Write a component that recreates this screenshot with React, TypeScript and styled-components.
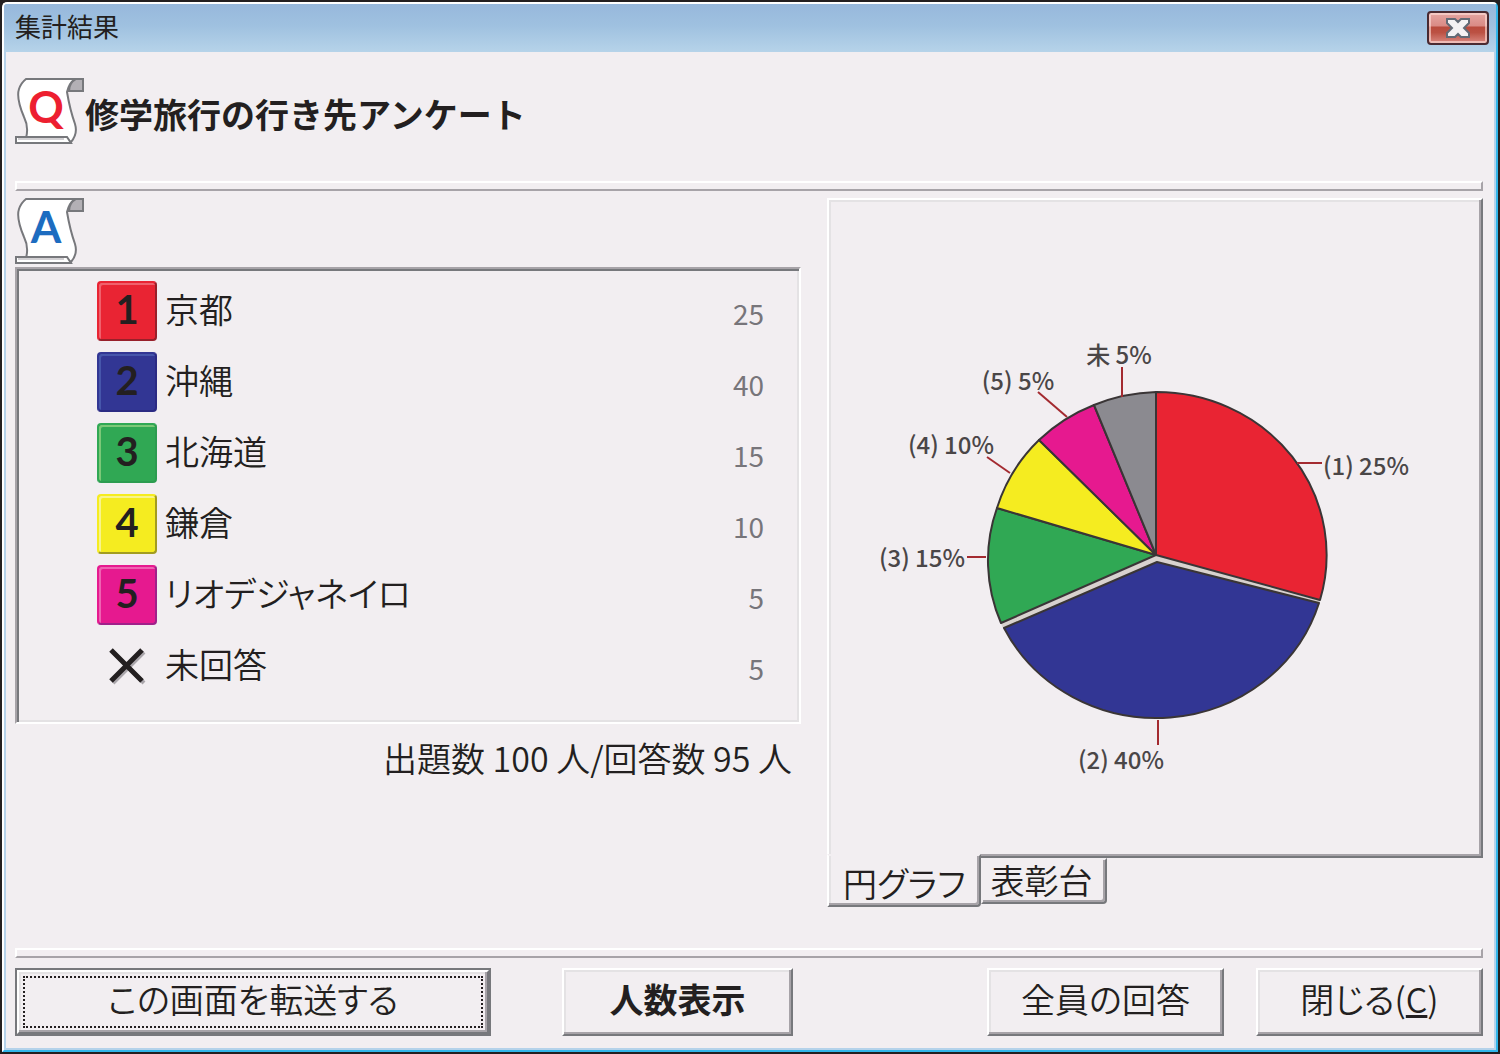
import React from 'react';
import styled, { createGlobalStyle, css } from 'styled-components';

const face = '#f2eef1';
const ink = '#231f20';
const dark = '#77787c';
const mid = '#a7a3a8';
const light = '#e4e2e4';

const GlobalStyle = createGlobalStyle`
  *, *::before, *::after { box-sizing: border-box; }
  body {
    margin: 0;
    background: ${ink};
    color: ${ink};
    font-family: "Noto Sans CJK JP", sans-serif;
    font-size: 34px;
    line-height: 44px;
    font-weight: 350;
  }
`;

const raised = css`
  border: 2px solid;
  border-color: #fff ${dark} ${dark} #fff;
  box-shadow: inset -2px -2px 0 ${mid}, inset 2px 2px 0 ${light};
`;

const Frame = styled.div`
  min-height: 100vh;
  display: flex;
  border: 2px solid ${ink};
`;

const Dialog = styled.main`
  flex: 1;
  min-width: 0;
  display: flex;
  flex-direction: column;
  border: 2px solid;
  border-color: #fff #31b5e9 #31b5e9 #fff;
  border-radius: 5px 5px 0 0;
  background: #b5d2ea;
  overflow: hidden;
`;

const TitleBar = styled.header`
  height: 48px;
  flex: none;
  display: flex;
  align-items: center;
  justify-content: space-between;
  padding: 0 7px 0 11px;
  background: linear-gradient(#97b8dc, #9fc1e0 45%, #b6d3e9);
`;

const WindowTitle = styled.span`
  padding-bottom: 4px;
  font-size: 26px;
  line-height: 32px;
  font-weight: 400;
`;

const CloseButton = styled.button`
  width: 62px;
  height: 34px;
  display: flex;
  align-items: center;
  justify-content: center;
  padding: 0;
  border: 2px solid #4a2a31;
  border-radius: 4px;
  background: linear-gradient(#e5a6a2, #d98a84 44%, #b94a3c 46%, #bb5143 65%, #d98880);
  box-shadow: inset 0 0 0 2px rgba(255, 225, 220, 0.6);
`;

const Body = styled.div`
  flex: 1;
  display: flex;
  flex-direction: column;
  margin: 0 2px 2px;
  padding: 0 11px 12px 9px;
  background: ${face};
`;

const Question = styled.section`
  display: flex;
  align-items: center;
  padding: 26px 0 36px;
`;

const QuestionTitle = styled.h1`
  margin: 0;
  padding-top: 4px;
  font-size: 34px;
  line-height: 44px;
  font-weight: 700;
`;

const Divider = styled.hr`
  width: 100%;
  height: 10px;
  flex: none;
  margin: 0;
  border: 2px solid;
  border-color: #fff ${mid} ${mid} #fff;
`;

const Columns = styled.div`
  display: grid;
  grid-template-columns: minmax(0, 786fr) minmax(0, 656fr);
  column-gap: 26px;
  padding-top: 7px;
`;

const AnswerColumn = styled.section`
  display: flex;
  flex-direction: column;
`;

const ListPanel = styled.div`
  margin-top: 2px;
  padding: 6px 35px 21px 80px;
  border: 2px solid;
  border-color: ${mid} #fff #fff ${mid};
  box-shadow: inset 2px 2px 0 ${dark}, inset -2px -2px 0 ${light};
`;

const AnswerTable = styled.table`
  width: 100%;
  border-collapse: collapse;
`;

const Cell = styled.td`
  height: 71px;
  padding: 0;
  vertical-align: middle;
`;

const BadgeCell = styled(Cell)`
  width: 68px;
`;

const NameCell = styled(Cell).attrs({ as: 'th', scope: 'row' })`
  padding-bottom: 4px;
  text-align: left;
  font-weight: 350;
  font-feature-settings: "palt";
`;

const CountCell = styled(Cell)`
  padding-top: 4px;
  text-align: right;
  font-size: 28px;
  font-weight: 400;
  color: #77757a;
`;

const Badge = styled.span<{ $fill: string; $shine: string; $shade: string }>`
  width: 60px;
  height: 60px;
  display: flex;
  align-items: center;
  justify-content: center;
  padding-bottom: 4px;
  border: 2px solid;
  border-color: ${p => p.$fill} ${p => p.$shade} ${p => p.$shade} ${p => p.$fill};
  border-radius: 4px;
  background: ${p => p.$fill};
  box-shadow: inset 2px 2px 0 ${p => p.$shine};
  font-family: Lato, sans-serif;
  font-size: 40px;
  line-height: 48px;
  font-weight: 700;
`;

const CrossBox = styled.span`
  width: 60px;
  display: flex;
  justify-content: center;
`;

const Totals = styled.p`
  margin: 0;
  padding: 12px 9px 0 0;
  text-align: right;
`;

const ChartColumn = styled.section`
  display: flex;
  flex-direction: column;
`;

const ChartPanel = styled.div`
  ${raised}
  padding: 2px;
`;

const Chart = styled.svg`
  display: block;
  width: 100%;
  height: auto;
  font-family: "Noto Sans CJK JP", sans-serif;
  font-size: 24px;
  font-weight: 500;
`;

const Tabs = styled.div`
  display: flex;
  align-items: flex-start;
`;

const Tab = styled.button<{ $active?: boolean }>`
  height: 46px;
  padding: 0 12px 4px 8px;
  border: 2px solid;
  border-color: transparent ${dark} ${dark} transparent;
  border-radius: 0 0 4px 0;
  box-shadow: inset -2px -2px 0 ${mid};
  background: ${face};
  color: inherit;
  font: inherit;
  line-height: 40px;
  font-feature-settings: "palt";
  ${p => p.$active && css`
    position: relative;
    height: 53px;
    margin-top: -4px;
    padding: 4px 13px 0 14px;
    border-left-color: #fff;
    box-shadow: inset -2px -2px 0 ${mid}, inset 2px 0 0 ${light};
  `}
`;

const Footer = styled.footer`
  margin-top: auto;
`;

const Actions = styled.div`
  display: grid;
  grid-template-columns: 476fr 71fr 231fr 194fr 237fr 32fr 227fr;
  padding-top: 10px;
`;

const PushButton = styled.button<{ $column: number; $bold?: boolean }>`
  grid-column: ${p => p.$column};
  height: 68px;
  padding: 0 0 6px;
  ${raised}
  background: ${face};
  color: inherit;
  font: inherit;
  font-weight: ${p => (p.$bold ? 700 : 350)};
  font-feature-settings: "palt";
  white-space: nowrap;
`;

const DefaultRing = styled.div`
  grid-column: 1;
  display: grid;
  border: 2px solid ${dark};
`;

const DefaultButton = styled(PushButton)`
  height: 64px;
  padding: 4px;
`;

const FocusFrame = styled.span`
  display: flex;
  align-items: center;
  justify-content: center;
  height: 52px;
  padding-bottom: 6px;
  border: 2px dotted ${ink};
`;

function Scroll({ letter, color }: { letter: string; color: string }) {
  return (
    <svg width="70" height="67" viewBox="0 0 70 67" aria-hidden="true">
      <path
        d="M11 1H60Q54 5 52 14Q55 32 60 46Q63 56 56 64L50 60H11Q14 49 9 39Q1 20 4 11Q6 5 11 1Z"
        fill="#fff"
        stroke={dark}
        strokeWidth="2"
      />
      <path d="M68 1V13H54Q54 5 61 1Z" fill="#b3b0b5" stroke={dark} strokeWidth="2" />
      <path d="M1 59H52L56 65H1Z" fill="#fff" stroke={dark} strokeWidth="2" />
      <path d="M3 61H49" stroke="#d3d1d4" strokeWidth="2" />
      <text x="31" y="45" textAnchor="middle" fontFamily="Lato" fontWeight="700" fontSize="44" fill={color}>
        {letter}
      </text>
    </svg>
  );
}

const answers = [
  { name: '京都', count: 25, fill: '#e92433', shine: '#f0606c', shade: '#98202a' },
  { name: '沖縄', count: 40, fill: '#323694', shine: '#4656ab', shade: '#2b2a83' },
  { name: '北海道', count: 15, fill: '#30a854', shine: '#7cc878', shade: '#2c9c50' },
  { name: '鎌倉', count: 10, fill: '#f5ec20', shine: '#f8f48c', shade: '#a29c20' },
  { name: 'リオデジャネイロ', count: 5, fill: '#e6198f', shine: '#ef62b2', shade: '#a0208a' },
];

const slices = [
  { fill: '#e92433', d: 'M325 353V190A170 163 0 0 1 489 398Z' },
  { fill: '#30a854', d: 'M325 353L170 421A170 163 0 0 1 166 306Z' },
  { fill: '#f5ec20', d: 'M325 353L166 306A170 163 0 0 1 208 238Z' },
  { fill: '#e6198f', d: 'M325 353L208 238A170 163 0 0 1 263 203Z' },
  { fill: '#8b8a90', d: 'M325 353L263 203A170 163 0 0 1 325 190Z' },
  { fill: '#323694', d: 'M326 360L488 401A170 162 0 0 1 173 426Z' },
];

const labels = [
  { text: '(1) 25%', x: 535, y: 273, line: 'M466 261H491' },
  { text: '(2) 40%', x: 290, y: 567, line: 'M327 518V543' },
  { text: '(3) 15%', x: 91, y: 365, line: 'M136 355H155' },
  { text: '(4) 10%', x: 120, y: 252, line: 'M156 255L179 271' },
  { text: '(5) 5%', x: 187, y: 188, line: 'M207 190L236 215' },
  { text: '未 5%', x: 288, y: 162, line: 'M291 165V195' },
];

export default function App() {
  return (
    <>
      <GlobalStyle />
      <Frame>
        <Dialog>
          <TitleBar>
            <WindowTitle>集計結果</WindowTitle>
            <CloseButton type="button" aria-label="閉じる">
              <svg width="26" height="22" viewBox="0 0 26 22">
                <path
                  d="M2 2H10L13 5L16 2H24V6L19 11L24 16V20H16L13 17L10 20H2V16L7 11L2 6Z"
                  fill="#f4f2f3"
                  stroke="#626a75"
                  strokeWidth="2"
                />
              </svg>
            </CloseButton>
          </TitleBar>
          <Body>
            <Question>
              <Scroll letter="Q" color="#ed1f30" />
              <QuestionTitle>修学旅行の行き先アンケート</QuestionTitle>
            </Question>
            <Divider />
            <Columns>
              <AnswerColumn>
                <Scroll letter="A" color="#1d6cc0" />
                <ListPanel>
                  <AnswerTable>
                    <tbody>
                      {answers.map((a, i) => (
                        <tr key={a.name}>
                          <BadgeCell>
                            <Badge $fill={a.fill} $shine={a.shine} $shade={a.shade}>{i + 1}</Badge>
                          </BadgeCell>
                          <NameCell>{a.name}</NameCell>
                          <CountCell>{a.count}</CountCell>
                        </tr>
                      ))}
                      <tr>
                        <BadgeCell>
                          <CrossBox>
                            <svg width="38" height="38" viewBox="0 0 38 38" aria-hidden="true">
                              <path d="M5 5L36 36M36 5L5 36" stroke="#aaa6ab" strokeWidth="4" />
                              <path d="M3 3L34 34M34 3L3 34" stroke={ink} strokeWidth="5" />
                            </svg>
                          </CrossBox>
                        </BadgeCell>
                        <NameCell>未回答</NameCell>
                        <CountCell>5</CountCell>
                      </tr>
                    </tbody>
                  </AnswerTable>
                </ListPanel>
                <Totals>出題数 100 人/回答数 95 人</Totals>
              </AnswerColumn>
              <ChartColumn>
                <ChartPanel role="tabpanel">
                  <Chart viewBox="0 0 648 652" role="img" aria-label="円グラフ">
                    <path d="M489 400L326 357L171 424" fill="none" stroke="#d8d2cf" strokeWidth="6" />
                    {slices.map(s => (
                      <path key={s.fill} d={s.d} fill={s.fill} stroke="#3a3536" strokeWidth="2" strokeLinejoin="round" />
                    ))}
                    {labels.map(l => (
                      <g key={l.text}>
                        <path d={l.line} stroke="#a32a30" strokeWidth="2" />
                        <text x={l.x} y={l.y} textAnchor="middle" fill="#4a4647">{l.text}</text>
                      </g>
                    ))}
                  </Chart>
                </ChartPanel>
                <Tabs role="tablist">
                  <Tab type="button" role="tab" aria-selected="true" $active>円グラフ</Tab>
                  <Tab type="button" role="tab" aria-selected="false">表彰台</Tab>
                </Tabs>
              </ChartColumn>
            </Columns>
            <Footer>
              <Divider />
              <Actions>
                <DefaultRing>
                  <DefaultButton type="button" $column={1}>
                    <FocusFrame>この画面を転送する</FocusFrame>
                  </DefaultButton>
                </DefaultRing>
                <PushButton type="button" $column={3} $bold>人数表示</PushButton>
                <PushButton type="button" $column={5}>全員の回答</PushButton>
                <PushButton type="button" $column={7}>閉じる(<u>C</u>)</PushButton>
              </Actions>
            </Footer>
          </Body>
        </Dialog>
      </Frame>
    </>
  );
}
